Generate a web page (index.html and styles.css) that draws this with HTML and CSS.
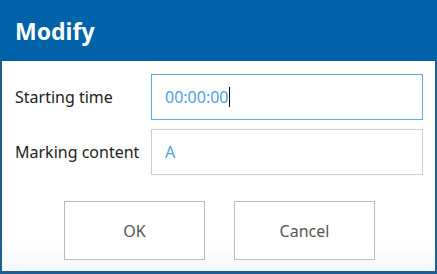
FILE: index.html
```html
<!DOCTYPE html>
<html lang="en">
<head>
    <meta charset="UTF-8">
    <title>Modify</title>
    <link rel="stylesheet" href="styles.css">
</head>
<body>

<div class="dialog">
    <div class="dialog-header">Modify</div>

    <form class="dialog-body">
        <div class="row">
            <label for="startTime">Starting time</label>
            <div class="field focused">00:00:00<span class="caret"></span></div>
        </div>
        <div class="row">
            <label for="content">Marking content</label>
            <div class="field">A</div>
        </div>

        <div class="buttons">
            <button type="button">OK</button>
            <button type="button">Cancel</button>
        </div>
    </form>
</div>

</body>
</html>
```

FILE: styles.css
```css
body {
    margin: 0;
    font-family: "Noto Sans", "Open Sans", sans-serif;
    background: #ffffff;
}
.dialog {
    width: 437px;
    height: 274px;
    box-sizing: border-box;
    border-left: 2px solid #1f5f8f;
    border-right: 2px solid #1f5f8f;
    border-bottom: 3px solid #1f5f8f;
    display: flex;
    flex-direction: column;
    background: linear-gradient(#ffffff 88%, #f3f8fc);
}
.dialog-header {
    height: 61px;
    box-sizing: border-box;
    background-color: #0062a8;
    color: white;
    font-size: 23px;
    font-weight: bold;
    padding: 15px 0 0 15px;
    margin: 0 -2px;
}
.dialog-body {
    padding: 13px 12px 0 13px;
}
.row {
    display: flex;
    align-items: center;
    margin-bottom: 9px;
}
label {
    width: 136px;
    font-size: 16px;
    color: #222;
}
.field {
    flex: 1;
    height: 46px;
    box-sizing: border-box;
    border: 1px solid #cccccc;
    padding: 0 13px;
    display: flex;
    align-items: center;
    color: #4a9fe0;
    font-size: 16px;
}
.field.focused {
    border-color: #58ade3;
}
.caret {
    width: 1px;
    height: 20px;
    background: #111;
}
.buttons {
    display: flex;
    gap: 29px;
    padding: 17px 0 0 49px;
}
button {
    width: 141px;
    height: 59px;
    background: white;
    border: 1px solid #bbbbbb;
    color: #555;
    font-family: inherit;
    font-size: 16px;
}
```
